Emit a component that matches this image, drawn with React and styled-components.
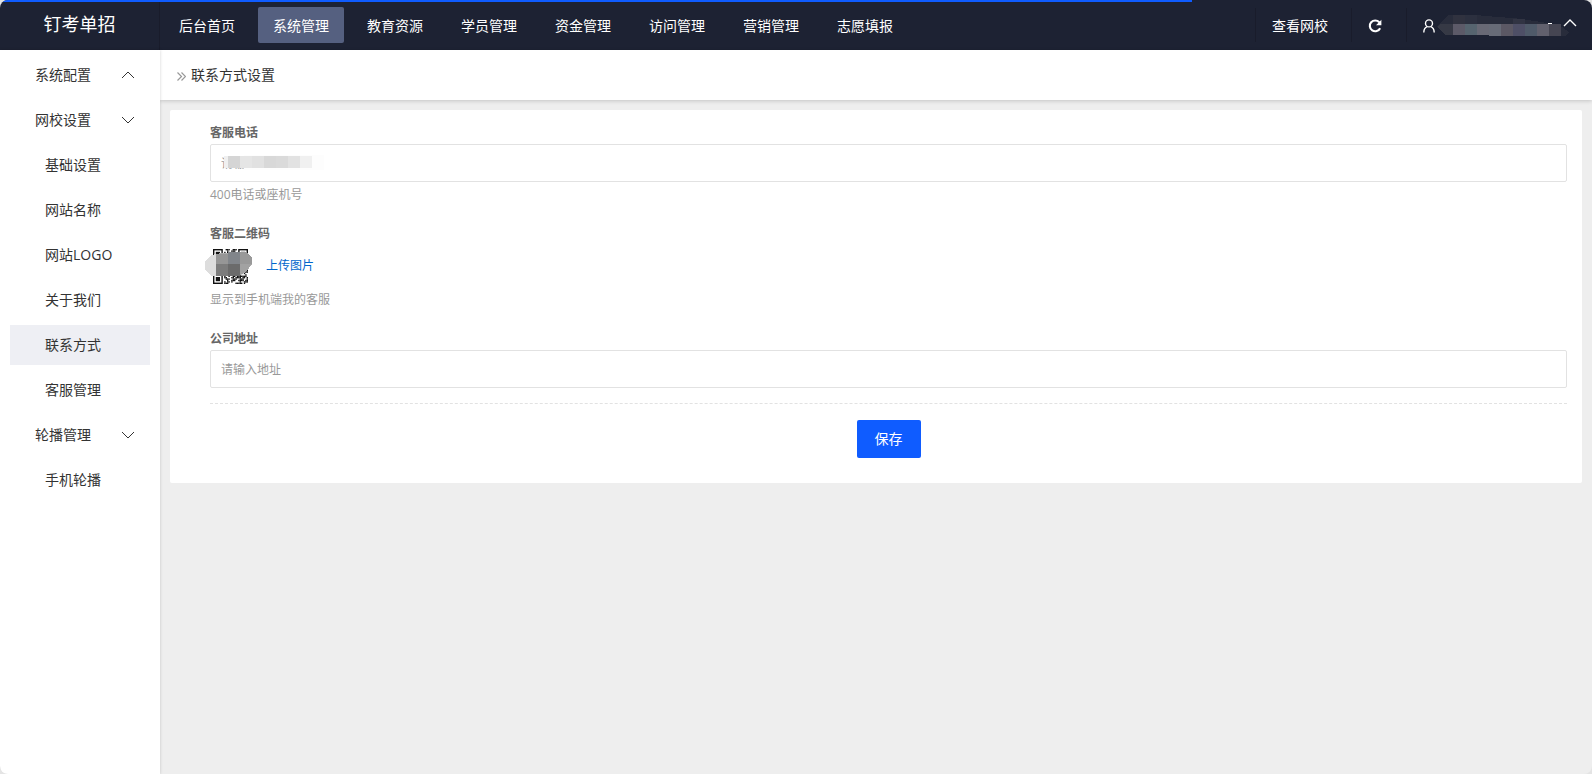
import React from "react";
import styled, { createGlobalStyle } from "styled-components";

const navItems = [
  "后台首页",
  "系统管理",
  "教育资源",
  "学员管理",
  "资金管理",
  "访问管理",
  "营销管理",
  "志愿填报",
];

const menuItems = [
  { text: "系统配置", group: true, arrow: "up" },
  { text: "网校设置", group: true, arrow: "down" },
  { text: "基础设置" },
  { text: "网站名称" },
  { text: "网站LOGO" },
  { text: "关于我们" },
  { text: "联系方式", active: true },
  { text: "客服管理" },
  { text: "轮播管理", group: true, arrow: "down" },
  { text: "手机轮播" },
];

const Chevron = ({ up, strokeWidth = 1 }) => (
  <svg width="14" height="8" viewBox="0 0 14 8" fill="none" stroke="currentColor" strokeWidth={strokeWidth} aria-hidden="true">
    <path d={up ? "M1 7 L7 1 L13 7" : "M1 1 L7 7 L13 1"} />
  </svg>
);

const DoubleRight = () => (
  <svg width="9" height="11" viewBox="0 -2 9 11" fill="none" stroke="#999" strokeWidth="1.2" aria-hidden="true">
    <path d="M0.5 0.5 L4.5 4.5 L0.5 8.5 M4.5 0.5 L8.5 4.5 L4.5 8.5" />
  </svg>
);

const RefreshIcon = () => (
  <svg width="14" height="14" viewBox="0 0 14 14" aria-hidden="true">
    <path d="M11.3 3.3 A5.4 5.4 0 1 0 12.1 9.2" fill="none" stroke="#fff" strokeWidth="2.1" />
    <path d="M13.4 0.8 V6.2 H8 Z" fill="#fff" />
  </svg>
);

const UserIcon = () => (
  <svg width="12" height="14" viewBox="0 0 12 14" fill="none" stroke="#fff" strokeWidth="1.4" aria-hidden="true">
    <circle cx="6" cy="4.4" r="3.5" />
    <path d="M0.8 13.4 C0.9 10.4 2 8.5 4.2 7.7 M11.2 13.4 C11.1 10.4 10 8.5 7.8 7.7" />
  </svg>
);

const nameCells = ["#5c5a68", "#56646f", "#686975", "#676b77", "#5b5864", "#4e4f66", "#4f5a69", "#61606d", "#454552"];

const HiddenName = () => (
  <svg width="132" height="22" viewBox="0 0 132 22" shapeRendering="crispEdges" aria-hidden="true">
    <path d="M0 12 L11 0 H38 L60 2 L76 3 L98 6 L122 10 L132 17 L128 21 L8 20 Z" fill="#282c3b" />
    <path d="M0 12 L4 9 H16 V20 H8 Z" fill="#363945" />
    <rect x="16" width="12" height="10" fill="#30323f" />
    <rect x="28" width="12" height="10" fill="#2c303f" />
    <rect x="76" y="4" width="12" height="6" fill="#313443" />
    {nameCells.map((fill, i) => (
      <rect key={i} x={16 + i * 12} y="9" width="12" height={i < 3 ? 11 : 12} fill={fill} />
    ))}
    <rect x="111" y="8" width="4" height="1" fill="#fff" />
  </svg>
);

const phoneCells = ["#d5d5d5", "#e5e5e5", "#e1e1e1", "#d8d8d8", "#dadada", "#e2e2e2", "#f0f0f0"];

const HiddenPhone = () => (
  <svg width="104" height="16" viewBox="0 0 104 16" shapeRendering="crispEdges" aria-hidden="true">
    <rect x="20" y="0" width="80" height="15" fill="#fdfdfd" />
    <rect x="0" y="1" width="4" height="12" fill="#f0f0f0" />
    {phoneCells.map((fill, i) => (
      <rect key={i} x={4 + i * 12} y="1" width="12" height="12" fill={fill} />
    ))}
  </svg>
);

// modules of the small code, corners are drawn separately
const modules = [];
for (let y = 0; y < 25; y++) {
  for (let x = 0; x < 25; x++) {
    const corner = (x < 8 && y < 8) || (x > 16 && y < 8) || (x < 8 && y > 16);
    if (!corner && (x * 7 + y * 13 + x * y * 3 + ((x * x) % 5)) % 7 < 4) {
      modules.push([x, y]);
    }
  }
}

const QrPicture = () => (
  <svg width="48" height="36" viewBox="0 0 48 36" aria-label="客服二维码" role="img">
    <g transform="translate(8 1) scale(1.4)">
      {modules.map(([x, y]) => (
        <rect key={x + "-" + y} x={x} y={y} width="1" height="1" fill="#111" />
      ))}
      {[[0, 0], [18, 0], [0, 18]].map(([x, y]) => (
        <g key={x + "-" + y}>
          <rect x={x + 0.5} y={y + 0.5} width="6" height="6" fill="#fff" stroke="#111" />
          <rect x={x + 2} y={y + 2} width="3" height="3" fill="#111" />
        </g>
      ))}
    </g>
    <g shapeRendering="crispEdges">
      <path d="M0 13 L6 7 L16 5 L34 4 L42 4 L47 10 V16 L42 23 L34 28 L18 28 L6 28 L0 21 Z" fill="#ababab" />
      <path d="M0 13 L6 7 L11 6 V28 H6 L0 21 Z" fill="#ddd" />
      <rect x="11" y="6" width="12" height="10" fill="#969696" />
      <rect x="23" y="4" width="12" height="12" fill="#81858a" />
      <path d="M35 4 H42 L47 10 V16 H35 Z" fill="#999" />
      <rect x="11" y="16" width="12" height="12" fill="#7c7c7c" />
      <rect x="23" y="16" width="12" height="12" fill="#6b6b6b" />
      <path d="M35 16 H46 L42 23 L35 27 Z" fill="#a2a2a2" />
    </g>
  </svg>
);

const App = () => {
  return (
    <>
      <GlobalStyle />
      <Page>
        <Progress />
        <Header>
          <Logo href="#">钉考单招</Logo>
          <Nav>
            {navItems.map((item) => (
              <NavLink key={item} href="#" $active={item === "系统管理"}>
                {item}
              </NavLink>
            ))}
          </Nav>
          <Tools>
            <ToolLink href="#">查看网校</ToolLink>
            <ToolButton type="button" aria-label="刷新">
              <RefreshIcon />
            </ToolButton>
            <UserButton type="button" aria-label="用户">
              <UserIcon />
              <HiddenName />
              <UserArrow>
                <Chevron up strokeWidth={1.4} />
              </UserArrow>
            </UserButton>
          </Tools>
        </Header>

        <Main>
          <Sidebar>
            {menuItems.map((item) => (
              <MenuLink key={item.text} href="#" $group={item.group} $active={item.active}>
                <span>{item.text}</span>
                {item.arrow && <Chevron up={item.arrow === "up"} />}
              </MenuLink>
            ))}
          </Sidebar>

          <Content>
            <Crumb>
              <DoubleRight />
              <h1>联系方式设置</h1>
            </Crumb>

            <Card>
              <Field>
                <Label htmlFor="phone">客服电话</Label>
                <InputWrap>
                  <Input id="phone" type="text" placeholder="请输入" />
                  <Cover>
                    <HiddenPhone />
                  </Cover>
                </InputWrap>
                <Hint>400电话或座机号</Hint>
              </Field>

              <Field>
                <Label as="div">客服二维码</Label>
                <Upload>
                  <QrPicture />
                  <a href="#">上传图片</a>
                </Upload>
                <Hint>显示到手机端我的客服</Hint>
              </Field>

              <Field>
                <Label htmlFor="address">公司地址</Label>
                <Input id="address" type="text" placeholder="请输入地址" />
              </Field>

              <Actions>
                <SaveButton type="submit">保存</SaveButton>
              </Actions>
            </Card>
          </Content>
        </Main>
      </Page>
    </>
  );
};

const GlobalStyle = createGlobalStyle`
* {
  box-sizing: border-box;
}
body {
  margin: 0;
  background: #e4e4e4;
}
body, button, input {
  font-family: "Open Sans", "Noto Sans CJK SC", sans-serif;
  font-size: 14px;
}
a {
  text-decoration: none;
}
`;

const Page = styled.div`
  position: relative;
  display: flex;
  flex-direction: column;
  min-height: 100vh;
  border-radius: 8px;
  overflow: hidden;
  background: #eee;
  color: #333;
`;

const Progress = styled.div`
  position: absolute;
  top: 0;
  left: 0;
  width: 74.9%;
  height: 2px;
  background: #0f5cff;
`;

const Header = styled.header`
  display: flex;
  height: 50px;
  background: #1d2233;
`;

const Logo = styled.a`
  width: 160px;
  border-right: 1px solid #191c2b;
  color: #fff;
  font-size: 18px;
  line-height: 48px;
  text-align: center;
`;

const Nav = styled.nav`
  display: flex;
  flex: 1;
  align-items: center;
`;

const NavLink = styled.a`
  margin: 0 4px;
  padding: 2px 15px 0;
  border-radius: 2px;
  background: ${({ $active }) => ($active ? "#556080" : "transparent")};
  color: #fff;
  line-height: 34px;
`;

const Tools = styled.div`
  display: flex;
  align-items: center;
`;

const ToolLink = styled.a`
  padding: 2px 23px 0 16px;
  border-left: 1px solid #191c2b;
  color: #fff;
  line-height: 32px;
`;

const ToolButton = styled.button`
  display: flex;
  align-items: center;
  height: 34px;
  padding: 2px 24px 0 16px;
  border: 0;
  border-left: 1px solid #191c2b;
  background: none;
`;

const UserButton = styled(ToolButton)`
  gap: 2px;
  padding: 2px 15px 0 16px;
  color: #fff;
`;

const UserArrow = styled.span`
  display: flex;
  margin: 0 0 6px -8px;
`;

const Main = styled.div`
  display: flex;
  flex: 1;
`;

const Sidebar = styled.aside`
  position: relative;
  display: flex;
  flex-direction: column;
  gap: 5px;
  width: 160px;
  padding: 5px 10px;
  background: #fff;
  box-shadow: 0 0 3px rgba(0, 0, 0, 0.18);
`;

const MenuLink = styled.a`
  display: flex;
  align-items: center;
  justify-content: space-between;
  height: 40px;
  padding: 0 15px 0 ${({ $group }) => ($group ? "25px" : "35px")};
  background: ${({ $active }) => ($active ? "#eeeff4" : "transparent")};
  color: #333;
  span {
    padding-bottom: 2px;
  }
`;

const Content = styled.main`
  flex: 1;
`;

const Crumb = styled.div`
  display: flex;
  align-items: center;
  gap: 5px;
  height: 50px;
  padding: 0 17px;
  background: #fff;
  box-shadow: 0 1px 4px rgba(0, 0, 0, 0.18);
  h1 {
    margin: 0;
    padding-bottom: 2px;
    font-size: 14px;
    font-weight: 400;
  }
`;

const Card = styled.form`
  margin: 10px;
  padding: 10px 15px 25px 40px;
  border-radius: 2px;
  background: #fff;
`;

const Field = styled.div`
  margin-bottom: 15px;
`;

const Label = styled.label`
  display: block;
  padding-top: 2px;
  color: #666;
  font-size: 12px;
  font-weight: 700;
  line-height: 22px;
`;

const InputWrap = styled.div`
  position: relative;
`;

const Input = styled.input`
  display: block;
  width: 100%;
  height: 38px;
  padding: 0 10px;
  border: 1px solid #e2e2e2;
  border-radius: 2px;
  font-size: 12px;
  &::placeholder {
    color: #999;
  }
`;

const Cover = styled.span`
  position: absolute;
  top: 11px;
  left: 14px;
  display: flex;
  pointer-events: none;
`;

const Hint = styled.div`
  padding-top: 2px;
  color: #999;
  font-size: 12px;
  line-height: 22px;
`;

const Upload = styled.div`
  display: flex;
  align-items: center;
  gap: 13px;
  height: 42px;
  margin-left: -5px;
  a {
    padding-bottom: 2px;
    color: #0066cc;
    font-size: 12px;
  }
`;

const Actions = styled.div`
  padding-top: 16px;
  border-top: 1px dashed #e2e2e2;
  text-align: center;
`;

const SaveButton = styled.button`
  height: 38px;
  padding: 0 18px 2px;
  border: 0;
  border-radius: 2px;
  background: #0f5cff;
  color: #fff;
`;

export default App;
